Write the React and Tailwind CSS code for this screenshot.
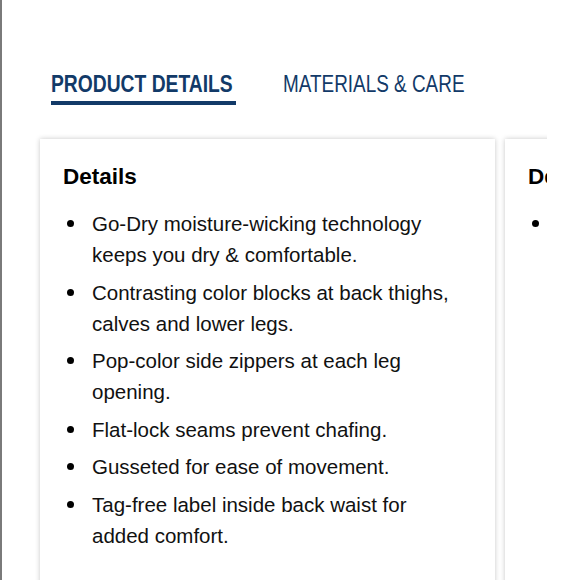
import React from 'react';

const items = [
  'Go-Dry moisture-wicking technology keeps you dry & comfortable.',
  'Contrasting color blocks at back thighs, calves and lower legs.',
  'Pop-color side zippers at each leg opening.',
  'Flat-lock seams prevent chafing.',
  'Gusseted for ease of movement.',
  'Tag-free label inside back waist for added comfort.',
];

const body = { fontFamily: '"Liberation Sans", Arial, sans-serif' };

function DetailCard({ list }) {
  return (
    <div className="w-[455px] shrink-0 bg-white shadow-[0_0_5px_rgba(0,0,0,0.22)] pl-[23px] pt-[23px] h-[480px]">
      <h3 className="text-[22.5px] leading-[30px] font-bold text-black" style={body}>Details</h3>
      <ul className="mt-[16px] flex flex-col gap-[6.5px]">
        {list.map((t) => (
          <li key={t} className="flex text-[20.5px] leading-[31px] text-[#111]" style={body}>
            <span className="w-[29px] shrink-0 flex justify-start pl-[4px] pt-[12px]">
              <span className="block w-[7px] h-[7px] rounded-full bg-black"></span>
            </span>
            <span className="pr-[40px]">{t}</span>
          </li>
        ))}
      </ul>
    </div>
  );
}

export default function App() {
  return (
    <div className="w-[580px] h-[580px] overflow-hidden bg-white border-l-2 border-[#7a7a7a]">
      <div className="pt-[71px] pl-[49px] flex gap-[47px] text-[#123a68]" style={body}>
        <div className="flex flex-col w-[185px]">
          <span className="block whitespace-nowrap origin-left scale-x-[0.82] text-[23.5px] leading-[26px] font-bold uppercase">Product Details</span>
          <span className="mt-[4px] h-[4px] bg-[#123a68]"></span>
        </div>
        <div className="w-[184px]">
          <span className="block whitespace-nowrap origin-left scale-x-[0.805] text-[23.5px] leading-[26px] uppercase">Materials &amp; Care</span>
        </div>
      </div>
      <div className="w-[517px] ml-[28px] mt-[24px] pt-[10px] pl-[10px] overflow-hidden flex gap-[10px]">
        <DetailCard list={items} />
        <DetailCard list={['Placeholder text for another column']} />
      </div>
    </div>
  );
}
